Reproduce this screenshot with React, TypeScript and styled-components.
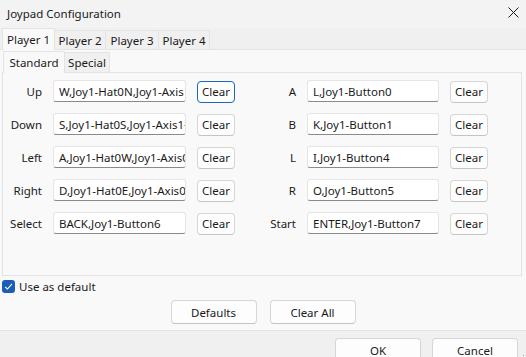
import { FC } from "react";
import styled, { createGlobalStyle } from "styled-components";

const GlobalStyle = createGlobalStyle`
  html, body {
    margin: 0;
    padding: 0;
    background: #f0f0f0;
  }
  * {
    box-sizing: border-box;
  }
`;

interface IBinding {
  label: string;
  value: string;
}

const leftBindings: IBinding[] = [
  { label: "Up", value: "W,Joy1-Hat0N,Joy1-Axis1-" },
  { label: "Down", value: "S,Joy1-Hat0S,Joy1-Axis1+" },
  { label: "Left", value: "A,Joy1-Hat0W,Joy1-Axis0-" },
  { label: "Right", value: "D,Joy1-Hat0E,Joy1-Axis0+" },
  { label: "Select", value: "BACK,Joy1-Button6" },
];

const rightBindings: IBinding[] = [
  { label: "A", value: "L,Joy1-Button0" },
  { label: "B", value: "K,Joy1-Button1" },
  { label: "L", value: "I,Joy1-Button4" },
  { label: "R", value: "O,Joy1-Button5" },
  { label: "Start", value: "ENTER,Joy1-Button7" },
];

const players = [
  { name: "Player 1", width: 53 },
  { name: "Player 2", width: 51 },
  { name: "Player 3", width: 53 },
  { name: "Player 4", width: 51 },
];

const App: FC = () => {
  return (
    <>
      <GlobalStyle />
      <Window>
        <TitleBar>
          <Title>Joypad Configuration</Title>
          <CloseButton>
            <svg width="11" height="11" viewBox="0 0 11 11">
              <path d="M0.5 0.5 L10.5 10.5 M10.5 0.5 L0.5 10.5" stroke="#1a1a1a" strokeWidth="1" />
            </svg>
          </CloseButton>
        </TitleBar>

        <TabStrip>
          {players.map((p, i) => (
            <Tab key={p.name} $active={i === 0} $width={p.width}>
              {p.name}
            </Tab>
          ))}
        </TabStrip>

        <Page>
          <InnerTabStrip>
            <InnerTab $active $width={62}>
              Standard
            </InnerTab>
            <InnerTab $width={45}>Special</InnerTab>
          </InnerTabStrip>

          <Panel>
            <BindGrid>
              {leftBindings.map((b, i) => {
                const r = rightBindings[i];
                return [
                  <Label key={b.label + "l"}>{b.label}</Label>,
                  <KeyInput key={b.label + "i"} readOnly value={b.value} />,
                  <ClearButton key={b.label + "b"} $focused={i === 0}>
                    Clear
                  </ClearButton>,
                  <Label key={r.label + "l2"}>{r.label}</Label>,
                  <KeyInput key={r.label + "i2"} readOnly value={r.value} />,
                  <ClearButton key={r.label + "b2"}>Clear</ClearButton>,
                ];
              })}
            </BindGrid>
          </Panel>

          <CheckRow>
            <CheckBox>
              <svg width="9" height="9" viewBox="0 0 9 9">
                <path d="M1 4.8 L3.4 7 L8 1.8" stroke="#fff" strokeWidth="1.1" fill="none" />
              </svg>
            </CheckBox>
            <CheckText>Use as default</CheckText>
          </CheckRow>

          <ActionRow>
            <PushButton>Defaults</PushButton>
            <PushButton>Clear All</PushButton>
          </ActionRow>
        </Page>

        <Footer>
          <PushButton>OK</PushButton>
          <PushButton>Cancel</PushButton>
          <Grip>
            <svg width="6" height="6" viewBox="0 0 6 6">
              <rect x="4" y="0" width="1" height="1" fill="#9a9a9a" />
              <rect x="2" y="2" width="1" height="1" fill="#9a9a9a" />
              <rect x="4" y="2" width="1" height="1" fill="#9a9a9a" />
              <rect x="0" y="4" width="1" height="1" fill="#9a9a9a" />
              <rect x="2" y="4" width="1" height="1" fill="#9a9a9a" />
              <rect x="4" y="4" width="1" height="1" fill="#9a9a9a" />
            </svg>
          </Grip>
        </Footer>
      </Window>
    </>
  );
};

const font = `"Noto Sans", "Open Sans", sans-serif`;
const size = "11.5px";

const Window = styled.div`
  width: 526px;
  height: 357px;
  overflow: hidden;
  display: flex;
  flex-direction: column;
  background: #f0f0f0;
  font-family: ${font};
  font-size: ${size};
  color: #1a1a1a;
`;

const TitleBar = styled.div`
  height: 28px;
  flex: none;
  display: flex;
  align-items: center;
  justify-content: space-between;
  padding-left: 7px;
  background: #f3f3f3;
`;

const Title = styled.div`
  font-size: ${size};
  color: #1a1a1a;
  margin-top: -2px;
`;

const CloseButton = styled.div`
  width: 26px;
  height: 28px;
  display: flex;
  align-items: center;
  justify-content: center;
  margin-top: -4px;
`;

const TabStrip = styled.div`
  height: 22px;
  flex: none;
  display: flex;
  align-items: flex-end;
  padding-left: 2px;
  background: #f0f0f0;
  border-bottom: 1px solid #e3e3e3;
`;

const Tab = styled.div<{ $active?: boolean; $width: number }>`
  width: ${(p) => p.$width}px;
  height: ${(p) => (p.$active ? "22px" : "19px")};
  display: flex;
  align-items: center;
  justify-content: center;
  white-space: nowrap;
  background: ${(p) => (p.$active ? "#f9f9f9" : "#f0f0f0")};
  border: 1px solid #e3e3e3;
  border-bottom: none;
  border-left: ${(p) => (p.$active ? "1px solid #e3e3e3" : "none")};
  margin-bottom: ${(p) => (p.$active ? "-1px" : "0")};
  padding-top: ${(p) => (p.$active ? "0" : "1px")};
`;

const Page = styled.div`
  height: 281px;
  flex: none;
  display: flex;
  flex-direction: column;
  padding: 1px 4px 0 2px;
  background: #f9f9f9;
  border-bottom: 1px solid #e3e3e3;
`;

const InnerTabStrip = styled.div`
  height: 22px;
  display: flex;
  align-items: flex-end;
  padding-left: 1px;
  border-bottom: 1px solid #e3e3e3;
`;

const InnerTab = styled.div<{ $active?: boolean; $width: number }>`
  width: ${(p) => p.$width}px;
  height: ${(p) => (p.$active ? "22px" : "20px")};
  display: flex;
  align-items: center;
  justify-content: center;
  white-space: nowrap;
  background: ${(p) => (p.$active ? "#f9f9f9" : "#f0f0f0")};
  border: 1px solid #e3e3e3;
  border-bottom: none;
  border-left: ${(p) => (p.$active ? "1px solid #e3e3e3" : "none")};
  margin-bottom: ${(p) => (p.$active ? "-1px" : "0")};
`;

const Panel = styled.div`
  height: 203px;
  border: 1px solid #e3e3e3;
  border-top: none;
  background: #f9f9f9;
  padding: 7px 0 0 0;
`;

const BindGrid = styled.div`
  display: grid;
  grid-template-columns: 39px 133px 38px 50px 132px 38px;
  grid-auto-rows: 22px;
  column-gap: 11px;
  row-gap: 11px;
  align-items: center;
`;

const Label = styled.div`
  text-align: right;
  padding-top: 1px;
`;

const KeyInput = styled.input`
  width: 100%;
  height: 22px;
  padding: 0 0 0 5px;
  margin: 0;
  font-family: ${font};
  font-size: ${size};
  color: #1a1a1a;
  background: #ffffff;
  border: 1px solid #e5e5e5;
  border-bottom: 1px solid #8a8a8a;
  border-radius: 3px;
  outline: none;
`;

const ClearButton = styled.button<{ $focused?: boolean }>`
  height: 22px;
  width: 38px;
  padding: 0;
  margin: 1px 0 0 0;
  font-family: ${font};
  font-size: ${size};
  color: #1a1a1a;
  background: #fdfdfd;
  border: 1px solid ${(p) => (p.$focused ? "#1a66c0" : "#d6d6d6")};
  border-bottom-color: ${(p) => (p.$focused ? "#1a66c0" : "#c4c4c4")};
  border-radius: 4px;
`;

const CheckRow = styled.div`
  display: flex;
  align-items: center;
  gap: 4px;
  height: 14px;
  margin-top: 3px;
`;

const CheckBox = styled.div`
  width: 13px;
  height: 13px;
  border-radius: 3px;
  background: #1a5fb4;
  display: flex;
  align-items: center;
  justify-content: center;
`;

const CheckText = styled.div`
  font-size: ${size};
`;

const ActionRow = styled.div`
  display: flex;
  justify-content: center;
  gap: 13px;
  margin-top: 7px;
  padding-left: 2px;
`;

const PushButton = styled.button`
  width: 86px;
  height: 24px;
  padding: 0;
  font-family: ${font};
  font-size: ${size};
  color: #1a1a1a;
  background: #fdfdfd;
  border: 1px solid #d6d6d6;
  border-bottom-color: #c4c4c4;
  border-radius: 4px;
`;

const Footer = styled.div`
  position: relative;
  flex: 1;
  display: flex;
  justify-content: flex-end;
  align-items: flex-start;
  gap: 11px;
  padding: 7px 8px 0 0;
  background: #f0f0f0;
`;

const Grip = styled.div`
  position: absolute;
  right: 1px;
  bottom: 1px;
  width: 6px;
  height: 6px;
  display: flex;
`;

export default App;
